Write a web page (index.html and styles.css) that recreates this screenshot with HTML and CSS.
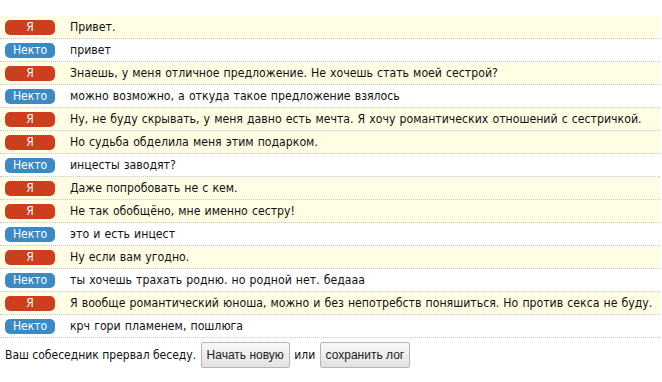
FILE: index.html
```html
<!DOCTYPE html>
<html>
  <head>
    <title>Чат</title>
    <link rel="stylesheet" href="styles.css">
  </head>
  <body>
    <div class="log">
      <div class="msg me"><span class="who">Я</span><span class="text">Привет.</span></div>
      <div class="msg other"><span class="who">Некто</span><span class="text">привет</span></div>
      <div class="msg me"><span class="who">Я</span><span class="text">Знаешь, у меня отличное предложение. Не хочешь стать моей сестрой?</span></div>
      <div class="msg other"><span class="who">Некто</span><span class="text">можно возможно, а откуда такое предложение взялось</span></div>
      <div class="msg me"><span class="who">Я</span><span class="text">Ну, не буду скрывать, у меня давно есть мечта. Я хочу романтических отношений с сестричкой.</span></div>
      <div class="msg me"><span class="who">Я</span><span class="text">Но судьба обделила меня этим подарком.</span></div>
      <div class="msg other"><span class="who">Некто</span><span class="text">инцесты заводят?</span></div>
      <div class="msg me"><span class="who">Я</span><span class="text">Даже попробовать не с кем.</span></div>
      <div class="msg me"><span class="who">Я</span><span class="text">Не так обобщёно, мне именно сестру!</span></div>
      <div class="msg other"><span class="who">Некто</span><span class="text">это и есть инцест</span></div>
      <div class="msg me"><span class="who">Я</span><span class="text">Ну если вам угодно.</span></div>
      <div class="msg other"><span class="who">Некто</span><span class="text">ты хочешь трахать родню. но родной нет. бедааа</span></div>
      <div class="msg me"><span class="who">Я</span><span class="text">Я вообще романтический юноша, можно и без непотребств поняшиться. Но против секса не буду.</span></div>
      <div class="msg other"><span class="who">Некто</span><span class="text">крч гори пламенем, пошлюга</span></div>
    </div>

    <div class="status">
      Ваш собеседник прервал беседу.
      <button class="btn">Начать новую</button>
      или
      <button class="btn">сохранить лог</button>
    </div>
  </body>
</html>
```

FILE: styles.css
```css
body {
  margin: 0;
  padding-top: 16px;
  font-family: "DejaVu Sans Condensed", "DejaVu Sans", sans-serif;
  font-size: 12px;
  color: #111;
  background: #fff;
}
.log {
  width: 660px;
}
.msg {
  display: flex;
  align-items: center;
  height: 22px;
  border-bottom: 1px dotted #c8c8c8;
  overflow: hidden;
}
.msg.me {
  background-color: #fffde3;
}
.who {
  flex-shrink: 0;
  width: 50px;
  height: 15px;
  line-height: 15px;
  margin-left: 5px;
  margin-right: 15px;
  border-radius: 5px;
  color: #fff;
  text-align: center;
  font-size: 12px;
}
.me .who {
  background-color: #cc3e1e;
}
.other .who {
  background-color: #3b8ac4;
}
.text {
  white-space: nowrap;
  font-size: 12.2px;
  word-spacing: 0.6px;
}
.status {
  padding: 4px 5px;
  line-height: 26px;
}
.btn {
  height: 26px;
  padding: 0 5px;
  margin: 0 1px;
  font-family: "Liberation Sans", Arial, sans-serif;
  font-size: 12px;
  color: #222;
  border: 1px solid #b5b5b5;
  border-radius: 2px;
  background: linear-gradient(#f8f8f8, #e2e2e2);
  vertical-align: top;
}
```
